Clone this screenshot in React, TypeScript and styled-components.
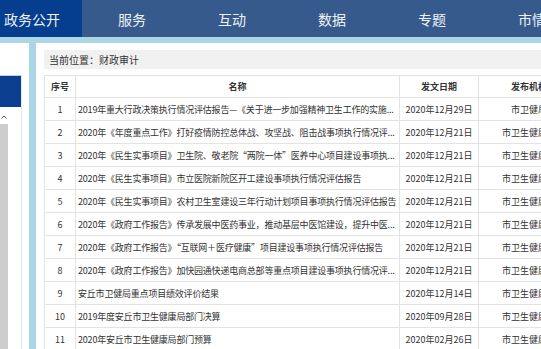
import React from "react";
import styled, { createGlobalStyle } from "styled-components";

const GlobalStyle = createGlobalStyle`
  html, body {
    margin: 0;
    padding: 0;
    overflow: hidden;
    background: #fff;
  }
  body {
    font-family: "Noto Sans CJK SC", "Noto Sans", sans-serif;
  }
`;

const Page = styled.div`
  width: 541px;
  height: 349px;
  overflow: hidden;
  display: flex;
  flex-direction: column;
`;

const Nav = styled.nav`
  height: 37px;
  flex-shrink: 0;
  display: flex;
  background: #365a8b;
  margin-left: -18px;
`;

const NavItem = styled.a<{ $active?: boolean }>`
  width: 100px;
  flex-shrink: 0;
  display: flex;
  align-items: center;
  justify-content: center;
  font-size: 14px;
  color: #eef2f7;
  text-decoration: none;
  background: ${(p) => (p.$active ? "#053e8f" : "transparent")};
`;

const Body = styled.div`
  flex: 1;
  display: flex;
  gap: 7px;
  padding-top: 6px;
  background: #aad6e6;
  min-height: 0;
`;

const Side = styled.aside`
  width: 29px;
  flex-shrink: 0;
  background: #fff;
  padding-top: 32px;
  display: flex;
  flex-direction: column;
`;

const SideBox = styled.div`
  width: 21px;
  flex: 1;
  border-top: 1px solid #c9cfd6;
  border-right: 1px solid #e6e6e6;
  display: flex;
  flex-direction: column;
`;

const SideHead = styled.div`
  height: 31px;
  background: #0b3f8f;
`;

const ScrollArea = styled.div`
  flex: 1;
  display: flex;
  flex-direction: column;
  width: 8px;
`;

const ScrollUp = styled.div`
  height: 15px;
  display: flex;
  align-items: center;
  justify-content: center;
  padding-top: 2px;
`;

const ScrollTrack = styled.div`
  flex: 1;
  background: #cdcdcd;
`;

const Main = styled.main`
  flex: 1;
  background: #fff;
  padding: 7px 0 0 8px;
  overflow: hidden;
  min-width: 0;
`;

const Crumb = styled.div`
  height: 19px;
  background: #f1f1f1;
  display: flex;
  align-items: center;
  padding-left: 5px;
  font-size: 10px;
  color: #333;
  width: 600px;
`;

const Table = styled.table`
  margin-top: 6px;
  border-collapse: collapse;
  table-layout: fixed;
  width: 531px;
  font-size: 9px;
  color: #333;
`;

const Th = styled.th<{ $w: number }>`
  width: ${(p) => p.$w}px;
  height: 21px;
  border: 1px solid #e3e3e3;
  font-weight: bold;
  text-align: center;
  padding: 0;
  white-space: nowrap;
  overflow: hidden;
`;

const Td = styled.td<{ $align?: string }>`
  height: 22px;
  border: 1px solid #e3e3e3;
  padding: 0 ${(p) => (p.$align === "left" ? "2px" : "0")};
  text-align: ${(p) => p.$align || "center"};
  letter-spacing: ${(p) => (p.$align === "left" ? "-0.2px" : "0")};
  white-space: nowrap;
  overflow: hidden;
`;

const navItems = ["政务公开", "服务", "互动", "数据", "专题", "市情"];

const rows = [
  ["2019年重大行政决策执行情况评估报告—《关于进一步加强精神卫生工作的实施...", "2020年12月29日", "市卫健局"],
  ["2020年《年度重点工作》打好疫情防控总体战、攻坚战、阻击战事项执行情况评...", "2020年12月21日", "市卫生健康局"],
  ["2020年《民生实事项目》卫生院、敬老院“两院一体”医养中心项目建设事项执...", "2020年12月21日", "市卫生健康局"],
  ["2020年《民生实事项目》市立医院新院区开工建设事项执行情况评估报告", "2020年12月21日", "市卫生健康局"],
  ["2020年《民生实事项目》农村卫生室建设三年行动计划项目事项执行情况评估报告", "2020年12月21日", "市卫生健康局"],
  ["2020年《政府工作报告》传承发展中医药事业，推动基层中医馆建设，提升中医...", "2020年12月21日", "市卫生健康局"],
  ["2020年《政府工作报告》“互联网＋医疗健康”项目建设事项执行情况评估报告", "2020年12月21日", "市卫生健康局"],
  ["2020年《政府工作报告》加快园通快递电商总部等重点项目建设事项执行情况评...", "2020年12月21日", "市卫生健康局"],
  ["安丘市卫健局重点项目绩效评价结果", "2020年12月14日", "市卫生健康局"],
  ["2019年度安丘市卫生健康局部门决算", "2020年09月28日", "市卫生健康局"],
  ["2020年安丘市卫生健康局部门预算", "2020年02月26日", "市卫生健康局"],
];

export default function App() {
  return (
    <Page>
      <GlobalStyle />
      <Nav>
        {navItems.map((n, i) => (
          <NavItem key={n} $active={i === 0}>
            {n}
          </NavItem>
        ))}
      </Nav>
      <Body>
        <Side>
          <SideBox>
            <SideHead />
            <ScrollArea>
              <ScrollUp>
                <svg width="6" height="4" viewBox="0 0 6 4">
                  <path d="M0.5 3.5 L3 1 L5.5 3.5" fill="none" stroke="#555" strokeWidth="1" />
                </svg>
              </ScrollUp>
              <ScrollTrack />
            </ScrollArea>
          </SideBox>
        </Side>
        <Main>
          <Crumb>当前位置：财政审计</Crumb>
          <Table>
            <thead>
              <tr>
                <Th $w={30}>序号</Th>
                <Th $w={323}>名称</Th>
                <Th $w={78}>发文日期</Th>
                <Th $w={100}>发布机构</Th>
              </tr>
            </thead>
            <tbody>
              {rows.map((r, i) => (
                <tr key={i}>
                  <Td>{i + 1}</Td>
                  <Td $align="left">{r[0]}</Td>
                  <Td>{r[1]}</Td>
                  <Td>{r[2]}</Td>
                </tr>
              ))}
            </tbody>
          </Table>
        </Main>
      </Body>
    </Page>
  );
}
